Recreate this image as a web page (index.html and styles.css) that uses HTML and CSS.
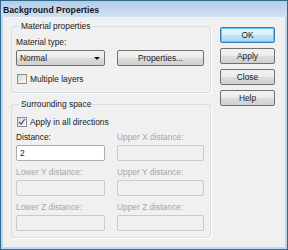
FILE: index.html
```html
<!DOCTYPE html>
<html lang="en">
<head>
    <meta charset="UTF-8">
    <title>Background Properties</title>
    <link rel="stylesheet" href="styles.css">
</head>
<body>
    <div class="window">
        <div class="titlebar">Background Properties</div>
        <div class="client">
            <div class="main">
                <div class="group">
                    <span class="group-title">Material properties</span>
                    <div class="label label-first">Material type:</div>
                    <div class="row">
                        <div class="select">
                            <span>Normal</span>
                            <span class="arrow"></span>
                        </div>
                        <button class="btn btn-wide">Properties...</button>
                    </div>
                    <label class="check"><span class="box"></span>Multiple layers</label>
                </div>

                <div class="group group-space">
                    <span class="group-title">Surrounding space</span>
                    <label class="check">
                        <span class="box">
                            <svg width="8" height="8" viewBox="0 0 8 8"><path d="M1.2 4 L3.1 6.2 L6.8 1.2" fill="none" stroke="#3d5b9b" stroke-width="1.3"/></svg>
                        </span>Apply in all directions
                    </label>
                    <div class="fields">
                        <div class="field">
                            <div class="label">Distance:</div>
                            <div class="input">2</div>
                        </div>
                        <div class="field disabled">
                            <div class="label">Upper X distance:</div>
                            <div class="input"></div>
                        </div>
                        <div class="field disabled">
                            <div class="label">Lower Y distance:</div>
                            <div class="input"></div>
                        </div>
                        <div class="field disabled">
                            <div class="label">Upper Y distance:</div>
                            <div class="input"></div>
                        </div>
                        <div class="field disabled">
                            <div class="label">Lower Z distance:</div>
                            <div class="input"></div>
                        </div>
                        <div class="field disabled">
                            <div class="label">Upper Z distance:</div>
                            <div class="input"></div>
                        </div>
                    </div>
                </div>
            </div>

            <div class="side">
                <button class="btn btn-default">OK</button>
                <button class="btn">Apply</button>
                <button class="btn">Close</button>
                <button class="btn">Help</button>
            </div>
        </div>
    </div>
</body>
</html>
```

FILE: styles.css
```css
* {
    box-sizing: border-box;
}

body {
    margin: 0;
    background: #ffffff;
    color: #1a1a1a;
    font-family: 'Liberation Sans', Arial, sans-serif;
    font-size: 8.4px;
}

.window {
    width: 288px;
    height: 250px;
    border: 1px solid #35698c;
    background: #c0d8ef; /* frame colour */
    padding: 0 2px 2px;
    display: flex;
    flex-direction: column;
}

.titlebar {
    height: 16px;
    line-height: 18px;
    font-size: 8.7px;
    font-weight: bold;
    color: #161616;
    background: linear-gradient(#b3cde8, #d0e2f3);
    margin: 0 -2px;
    padding: 0 2px;
}

.client {
    flex: 1;
    background: #f0f0f0;
    display: flex;
    gap: 9px;
    padding: 9px 0 0 8px;
}

.group {
    width: 200px;
    border: 1px solid #d5dfe5;
    border-radius: 3px;
    box-shadow: 1px 1px 0 #ffffff;
    padding: 0 0 8px 4px;
}

.group-space {
    margin-top: 11px;
    padding-bottom: 6px;
}

.group-title {
    display: block;
    width: fit-content;
    margin: -6px 0 0 3px;
    padding: 0 2px;
    line-height: 10px;
    background: #f0f0f0;
}

.label {
    line-height: 10px;
    white-space: nowrap;
}

.label-first {
    margin-top: 6px;
}

.row {
    display: flex;
    gap: 12px;
    margin-top: 3px;
}

.select {
    width: 89px;
    height: 16px;
    border: 1px solid #707070;
    border-radius: 2px;
    background: linear-gradient(#f2f2f2 0, #ebebeb 50%, #dddddd 50%, #cfcfcf 100%);
    display: flex;
    align-items: center;
    justify-content: space-between;
    padding: 0 4px 0 3px;
}

.arrow {
    width: 0;
    height: 0;
    border-left: 3px solid transparent;
    border-right: 3px solid transparent;
    border-top: 3px solid #111111;
}

.btn {
    height: 16px;
    padding: 0;
    border: 1px solid #707070;
    border-radius: 2px;
    background: linear-gradient(#f2f2f2 0, #ebebeb 50%, #dddddd 50%, #cfcfcf 100%);
    color: #1a1a1a;
    font: inherit;
    line-height: 14px;
}

.btn-wide {
    width: 87px;
}

.btn-default {
    border-color: #3c7fb1;
    background: linear-gradient(#eaf6fd 0, #d9f0fc 50%, #bee6fd 50%, #a7d9f5 100%);
    box-shadow: inset 0 0 0 1px #5ec8f0;
}

.check {
    display: flex;
    align-items: center;
    gap: 3px;
    height: 10px;
    line-height: 10px;
    margin-top: 8px;
    margin-left: 1px;
}

.box {
    width: 10px;
    height: 10px;
    border: 1px solid #8e8f8f;
    background: linear-gradient(135deg, #d8d8d8, #fafafa);
    display: flex;
    align-items: center;
    justify-content: center;
}

.fields {
    display: grid;
    grid-template-columns: 89px 87px;
    column-gap: 12px;
    row-gap: 6px;
    margin-top: 5px;
}

.field .input {
    height: 16px;
    margin-top: 3px;
    border: 1px solid #abadb3;
    border-radius: 2px;
    background: #ffffff;
    padding-left: 3px;
    line-height: 14px;
}

.field.disabled .label {
    color: #a5a5a5;
}

.field.disabled .input {
    border-color: #cacaca;
    background: #f0f0f0;
}

.side {
    width: 55px;
    display: flex;
    flex-direction: column;
    gap: 5px;
    margin-top: 1px;
}
```
